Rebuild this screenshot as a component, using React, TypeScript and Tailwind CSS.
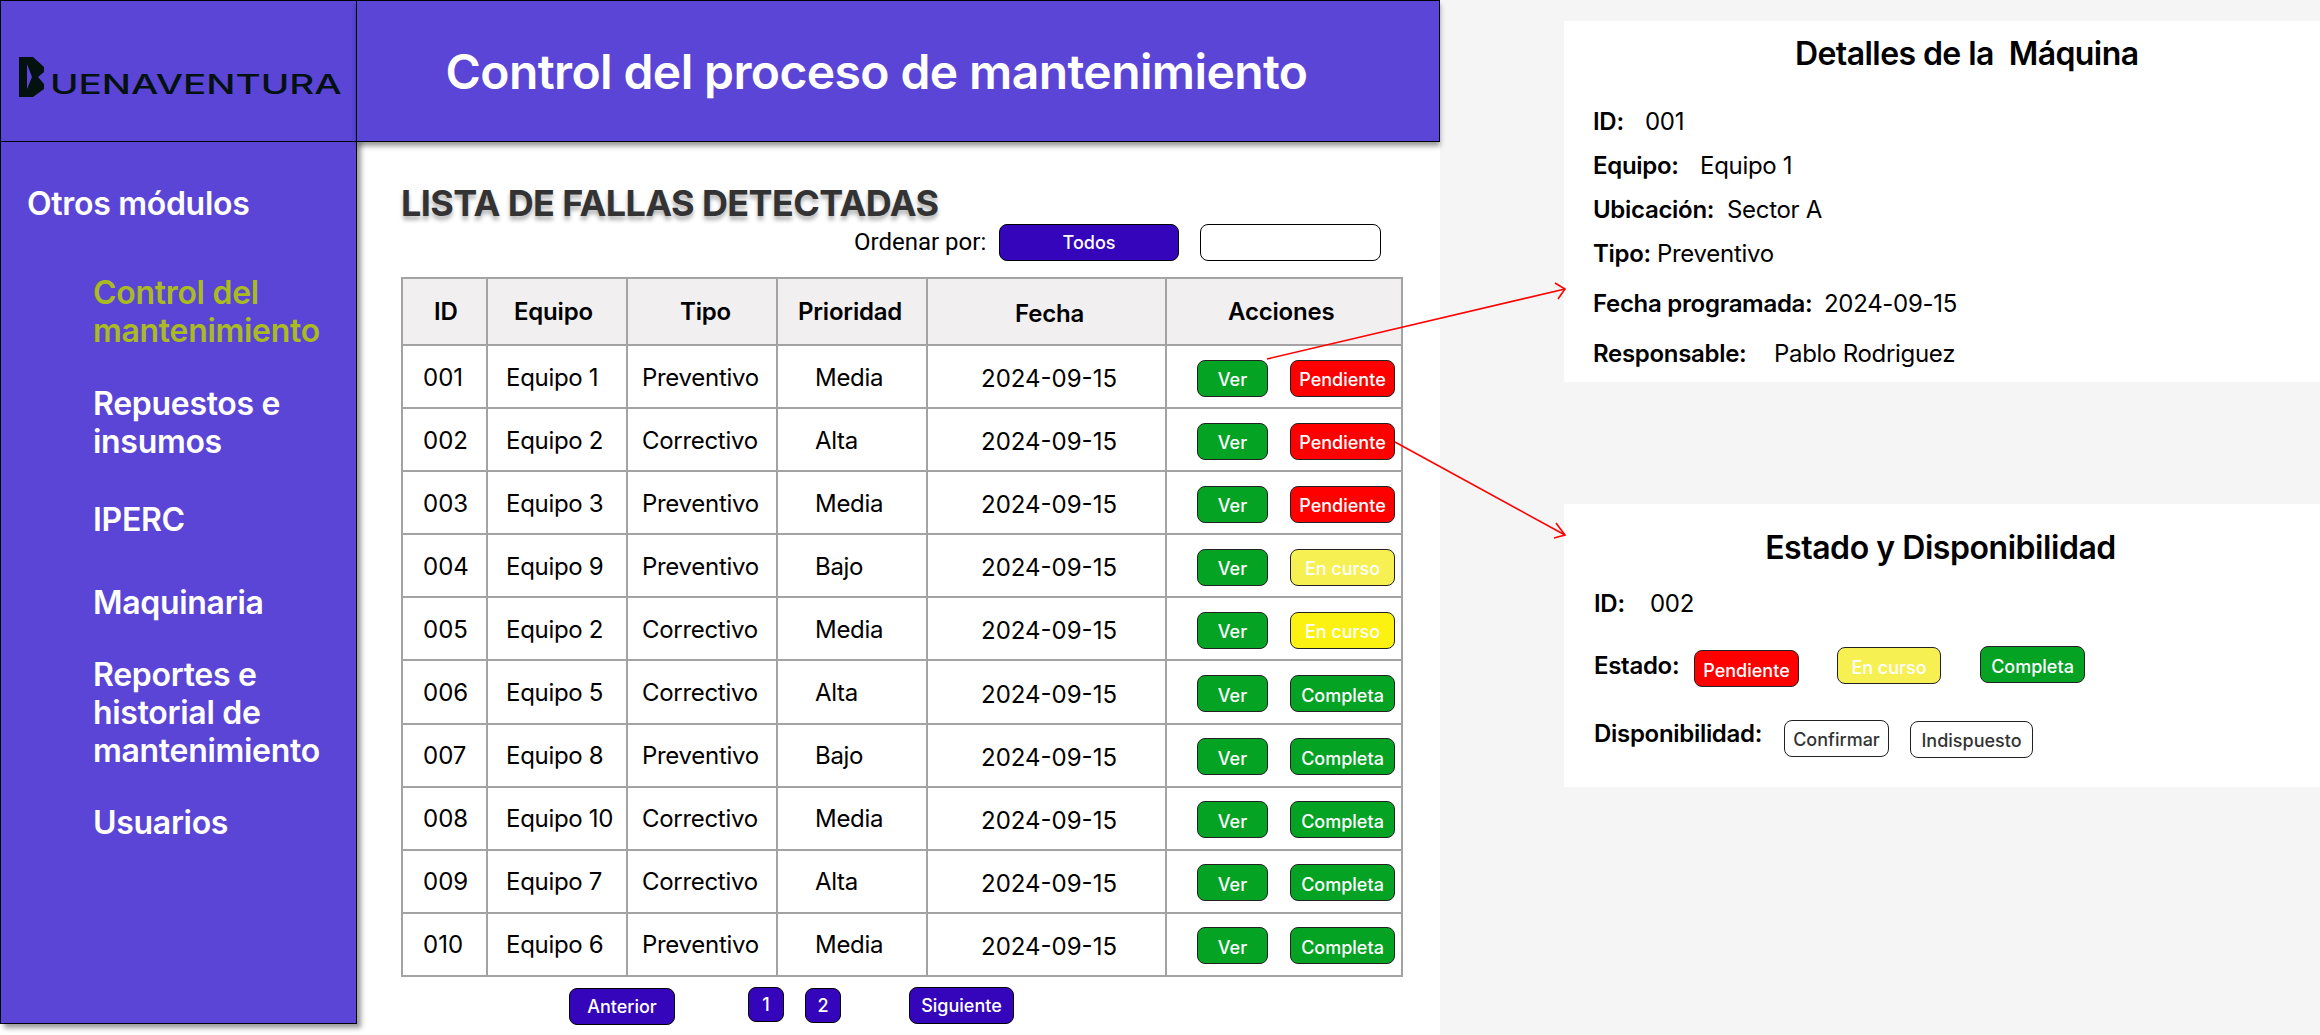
import React from "react";

const rows = [
  ["001", "Equipo 1", "Preventivo", "Media", "p"],
  ["002", "Equipo 2", "Correctivo", "Alta", "p"],
  ["003", "Equipo 3", "Preventivo", "Media", "p"],
  ["004", "Equipo 9", "Preventivo", "Bajo", "l"],
  ["005", "Equipo 2", "Correctivo", "Media", "y"],
  ["006", "Equipo 5", "Correctivo", "Alta", "c"],
  ["007", "Equipo 8", "Preventivo", "Bajo", "c"],
  ["008", "Equipo 10", "Correctivo", "Media", "c"],
  ["009", "Equipo 7", "Correctivo", "Alta", "c"],
  ["010", "Equipo 6", "Preventivo", "Media", "c"],
];

const statusStyle: Record<string, { label: string; cls: string }> = {
  p: { label: "Pendiente", cls: "bg-[#ff0000]" },
  l: { label: "En curso", cls: "bg-[#f6f052]" },
  y: { label: "En curso", cls: "bg-[#fbf212]" },
  c: { label: "Completa", cls: "bg-[#04a324]" },
};

const btn =
  "flex items-center justify-center h-[37px] rounded-[8px] border border-[#222] text-[18px] font-medium pt-[3px] text-white";
const pageBtn =
  "flex items-center justify-center rounded-[8px] border border-black bg-[#3405bb] text-white text-[18px] font-medium";
const th = "border-2 border-[#a3a3a3] bg-[#f1efef] text-left text-[24px] font-semibold tracking-[-0.2px] text-black p-0";
const td = "border-2 border-[#a3a3a3] text-left text-[24px] font-normal text-black p-0 pt-[2px]";

function Row({ label, labelCls, value, cls }: { label: string; labelCls: string; value: string; cls: string }) {
  return (
    <div className={`flex items-center text-[24px] leading-[30px] text-black tracking-[-0.3px] ${cls}`}>
      <span className={`font-semibold ${labelCls}`}>{label}</span>
      <span>{value}</span>
    </div>
  );
}

export default function App() {
  return (
    <div className="relative flex w-[2320px] h-[1035px] overflow-hidden bg-[#f5f5f5] font-['Inter',sans-serif]">
      <div className="flex w-[1440px] h-[1035px] bg-white items-start">
        <aside className="relative z-10 w-[357px] h-[1024px] flex flex-col bg-[#5b45d6] border border-black shadow-[4px_4px_5px_rgba(0,0,0,0.4)]">
          <div className="h-[141px] shrink-0 border-b border-black flex items-center pl-[18px] pt-[12px]">
            <svg width="25" height="40" viewBox="0 0 25 40" className="shrink-0">
              <path
                fillRule="evenodd"
                fill="#03110f"
                d="M0 0H14L25 10V15L19 20L25 27V32L14 40H0ZM8 7V32L13 20Z"
              />
            </svg>
            <span className="ml-[6px] mt-[15px] inline-block origin-left scale-x-[1.43] text-[27px] leading-[30px] font-medium text-[#03110f] whitespace-nowrap">
              UENAVENTURA
            </span>
          </div>
          <nav className="flex flex-col text-[32px] leading-[38px] font-semibold text-white tracking-[-0.3px]">
            <div className="ml-[26px] mt-[43px]">Otros módulos</div>
            <div className="ml-[92px] mt-[51px] text-[#a9bb1f]">Control del<br />mantenimiento</div>
            <div className="ml-[92px] mt-[35px]">Repuestos e<br />insumos</div>
            <div className="ml-[92px] mt-[40px]">IPERC</div>
            <div className="ml-[92px] mt-[45px]">Maquinaria</div>
            <div className="ml-[92px] mt-[34px]">Reportes e<br />historial de<br />mantenimiento</div>
            <div className="ml-[92px] mt-[34px]">Usuarios</div>
          </nav>
        </aside>

        <main className="w-[1083px] flex flex-col">
          <header className="relative z-10 h-[142px] flex items-center justify-center bg-[#5b45d6] border border-l-0 border-black shadow-[0_4px_5px_rgba(0,0,0,0.4)] text-white text-[48px] font-semibold tracking-[-0.6px] pt-[1px]">
            <span className="ml-[-43px]">Control del proceso de mantenimiento</span>
          </header>
          <div className="pl-[44px] flex flex-col">
            <h1 className="mt-[39px] h-[43px] text-[36px] leading-[44px] font-bold tracking-[-0.6px] text-[#333] [text-shadow:0_4px_4px_rgba(0,0,0,0.3)]">
              LISTA DE FALLAS DETECTADAS
            </h1>
            <div className="flex items-center h-[37px]">
              <span className="ml-[453px] w-[145px] text-[24px] font-['Roboto',sans-serif] text-black mb-[2px]">Ordenar por:</span>
              <div className="w-[180px] h-[37px] rounded-[8px] border border-black bg-[#3405bb] text-white text-[18px] font-medium flex items-center justify-center">Todos</div>
              <div className="ml-[21px] w-[181px] h-[37px] rounded-[8px] border border-black bg-white" />
            </div>
            <table className="mt-[16px] w-[1000px] table-fixed border-collapse">
              <colgroup>
                <col className="w-[85px]" />
                <col className="w-[140px]" />
                <col className="w-[150px]" />
                <col className="w-[150px]" />
                <col className="w-[239px]" />
                <col className="w-[236px]" />
              </colgroup>
              <thead>
                <tr className="h-[67px]">
                  <th className={`${th} pl-[31px]`}>ID</th>
                  <th className={`${th} pl-[26px]`}>Equipo</th>
                  <th className={`${th} pl-[52px]`}>Tipo</th>
                  <th className={`${th} pl-[20px]`}>Prioridad</th>
                  <th className={`${th} pl-[87px] pt-[4px]`}>Fecha</th>
                  <th className={`${th} pl-[61px]`}>Acciones</th>
                </tr>
              </thead>
              <tbody>
                {rows.map((r) => (
                  <tr key={r[0]} className="h-[63.1px]">
                    <td className={`${td} pl-[20px]`}>{r[0]}</td>
                    <td className={`${td} pl-[18px] tracking-[-0.3px]`}>{r[1]}</td>
                    <td className={`${td} pl-[14px] tracking-[-0.3px]`}>{r[2]}</td>
                    <td className={`${td} pl-[37px] tracking-[-0.3px]`}>{r[3]}</td>
                    <td className={`${td} pl-[53px] pt-[5px]`}>2024-09-15</td>
                    <td className={`${td} pl-[30px] !pt-[3px]`}>
                      <div className="flex">
                        <div className={`${btn} w-[71px] bg-[#04a324]`}>Ver</div>
                        <div className={`${btn} ml-[22px] w-[105px] ${statusStyle[r[4]].cls}`}>{statusStyle[r[4]].label}</div>
                      </div>
                    </td>
                  </tr>
                ))}
              </tbody>
            </table>
            <div className="mt-[10px] flex items-start">
              <div className={`${pageBtn} ml-[168px] mt-[1px] w-[106px] h-[37px]`}>Anterior</div>
              <div className={`${pageBtn} ml-[73px] w-[36px] h-[35px]`}>1</div>
              <div className={`${pageBtn} ml-[21px] mt-[1px] w-[36px] h-[35px] font-bold`}>2</div>
              <div className={`${pageBtn} ml-[68px] w-[105px] h-[37px]`}>Siguiente</div>
            </div>
          </div>
        </main>
      </div>

      <div className="ml-[124px] w-[756px] flex flex-col">
        <section className="mt-[21px] h-[361px] bg-white pl-[29px]">
          <h2 className="ml-[202px] mt-[13px] h-[40px] text-[32px] leading-[40px] font-semibold tracking-[-0.58px] text-black whitespace-pre">Detalles de la  Máquina</h2>
          <Row cls="mt-[33px]" label="ID:" labelCls="w-[52px]" value="001" />
          <Row cls="mt-[14px]" label="Equipo:" labelCls="w-[107px]" value="Equipo 1" />
          <Row cls="mt-[14px]" label="Ubicación:" labelCls="w-[134px]" value="Sector A" />
          <Row cls="mt-[14px]" label="Tipo:" labelCls="w-[64px]" value="Preventivo" />
          <Row cls="mt-[20px]" label="Fecha programada:" labelCls="w-[231px]" value="2024-09-15" />
          <Row cls="mt-[20px]" label="Responsable:" labelCls="w-[181px]" value="Pablo Rodriguez" />
        </section>
        <section className="mt-[122px] h-[283px] bg-white pl-[30px]">
          <h2 className="text-center ml-[-33px] mt-[24px] h-[40px] text-[32px] leading-[40px] font-semibold tracking-[-0.45px] text-black">Estado y Disponibilidad</h2>
          <Row cls="mt-[21px]" label="ID:" labelCls="w-[56px]" value="002" />
          <div className="mt-[27px] flex items-start">
            <span className="w-[100px] mt-[5px] text-[24px] leading-[30px] font-semibold tracking-[-0.3px] text-black">Estado:</span>
            <div className={`${btn} mt-[4px] w-[105px] bg-[#ff0000]`}>Pendiente</div>
            <div className={`${btn} ml-[38px] mt-[1px] w-[104px] bg-[#f6f052]`}>En curso</div>
            <div className={`${btn} ml-[39px] w-[105px] bg-[#04a324]`}>Completa</div>
          </div>
          <div className="mt-[33px] flex items-start">
            <span className="w-[190px] mt-[-1px] text-[24px] leading-[30px] font-semibold tracking-[-0.3px] text-black">Disponibilidad:</span>
            <div className={`${btn} w-[105px] bg-white !text-[#333] !pt-[2px]`}>Confirmar</div>
            <div className={`${btn} ml-[21px] mt-[1px] w-[123px] bg-white !text-[#333] !pt-[2px]`}>Indispuesto</div>
          </div>
        </section>
      </div>

      <svg className="absolute inset-0 z-20 pointer-events-none" width="2320" height="1035" fill="none" stroke="#ff0000" strokeWidth="1.6">
        <path d="M1267 359L1565 289" />
        <path d="M1555 283L1565 289L1558 299" />
        <path d="M1395 442L1565 535" />
        <path d="M1556 523L1565 535L1554 538" />
      </svg>
    </div>
  );
}
